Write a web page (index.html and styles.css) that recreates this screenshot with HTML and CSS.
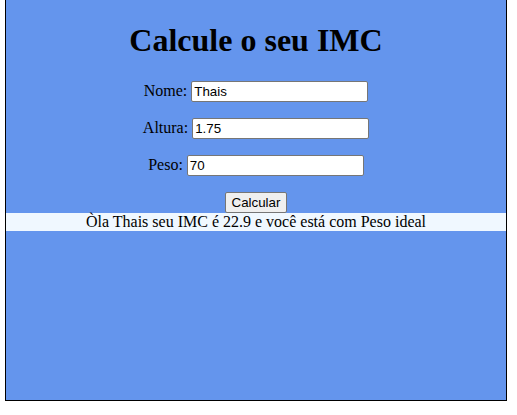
FILE: index.html
```html
<!DOCTYPE html>
<html lang="pt-BR">
<head>
<meta charset="utf-8">
<title>Calcule o seu IMC</title>
<link rel="stylesheet" href="styles.css">
</head>
<body>
<div class="card">
  <h1 class="title">Calcule o seu IMC</h1>
  <p class="row"><label for="nome">Nome:</label> <input class="field" id="nome" type="text" value="Thais"></p>
  <p class="row"><label for="altura">Altura:</label> <input class="field" id="altura" type="text" value="1.75"></p>
  <p class="row"><label for="peso">Peso:</label> <input class="field" id="peso" type="text" value="70"></p>
  <div class="actions"><button class="btn" type="button">Calcular</button></div>
  <div class="result">Òla Thais seu IMC é 22.9 e você está com Peso ideal</div>
</div>
</body>
</html>
```

FILE: styles.css
```css
html, body {
  margin: 0;
  padding: 0;
  background: #ffffff;
}

.card {
  display: flow-root;
  box-sizing: content-box;
  width: 500px;
  height: 399px;
  margin-left: 5px;
  padding-top: 1px;
  border: 1px solid #000000;
  border-top: 0;
  background: #6495ed;
  text-align: center;
  font-family: "Liberation Serif", "Times New Roman", serif;
  font-size: 16px;
  color: #000000;
}

.title {
  font-size: 32px;
  font-weight: bold;
  margin: 21.44px 0;
}

.row {
  margin: 16px 0;
}

.field {
  box-sizing: border-box;
  width: 177px;
  height: 21px;
  padding: 1px 2px;
  border: 1px solid #767676;
  border-radius: 2px;
  background: #ffffff;
  font-family: "Liberation Sans", Arial, sans-serif;
  font-size: 13.333px;
  color: #000000;
  vertical-align: baseline;
}

.actions {
  margin-top: 16px;
  line-height: 0;
}

.btn {
  box-sizing: border-box;
  height: 21px;
  padding: 1px 6px;
  border: 1px solid #767676;
  border-radius: 2px;
  background: #efefef;
  font-family: "Liberation Sans", Arial, sans-serif;
  font-size: 13.333px;
  line-height: normal;
  color: #000000;
}

.result {
  background: #f0f8ff;
  line-height: 18px;
}
```
